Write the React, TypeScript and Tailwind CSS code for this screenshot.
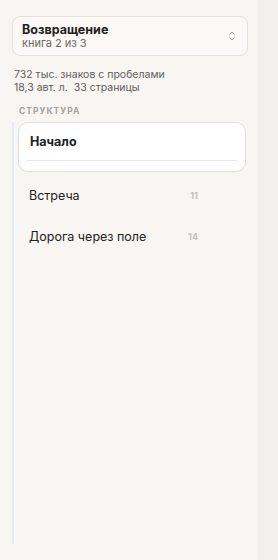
import { ChevronsUpDown } from "lucide-react";

const chapters = [
  { title: "Встреча", page: 11 },
  { title: "Дорога через поле", page: 14 },
];

export default function App() {
  return (
    <div className="flex h-[560px] w-[278px] font-['Inter','Noto_Sans',sans-serif] text-[#222]">
      <aside className="flex w-[258px] flex-col bg-[#f7f6f3] px-3 pt-4 pb-4">
        <button className="flex h-10 w-[236px] items-center rounded-lg border border-[#e4e1db] bg-[#faf9f7] pl-[9px] pr-[9px] text-left">
          <div className="flex flex-1 flex-col">
            <span className="text-[12.5px] font-bold leading-[15px] text-[#222]">Возвращение</span>
            <span className="text-[11px] leading-[13px] text-[#6b6a67]">книга 2 из 3</span>
          </div>
          <ChevronsUpDown size={12} strokeWidth={1.8} className="text-[#8a8986]" />
        </button>

        <div className="mt-3 pl-[2px] text-[10.5px] leading-[13px] text-[#5f5e5b]">
          <div>732 тыс. знаков с пробелами</div>
          <div>18,3 авт. л.&nbsp;&nbsp;33 страницы</div>
        </div>

        <div className="mt-3 pl-[7px] text-[8.5px] font-bold leading-[11px] tracking-[0.12em] text-[#a3a29e]">
          СТРУКТУРА
        </div>

        <div className="mt-[5px] flex flex-1 flex-col border-l-2 border-[#e3ebfa] pl-1">
          <div className="w-[228px] rounded-[10px] border border-[#e2dfd9] bg-white px-2 pt-[10px] pb-[10px]">
            <div className="pl-[3px] text-[12.5px] font-bold leading-[18px]">Начало</div>
            <div className="mt-[9px] h-px bg-[#e9e7e2]" />
          </div>
          <div className="mt-[3px] flex flex-col">
            {chapters.map((c) => (
              <div key={c.page} className="flex h-[41px] w-[228px] items-center pl-[11px]">
                <span className="flex-1 text-[12.5px] leading-[18px] text-[#222]">{c.title}</span>
                <span className="mr-[48px] text-[9px] font-bold text-[#c4c2bd]">{c.page}</span>
              </div>
            ))}
          </div>
        </div>
      </aside>
      <div className="flex-1 bg-[#f1f0ee]" />
    </div>
  );
}
